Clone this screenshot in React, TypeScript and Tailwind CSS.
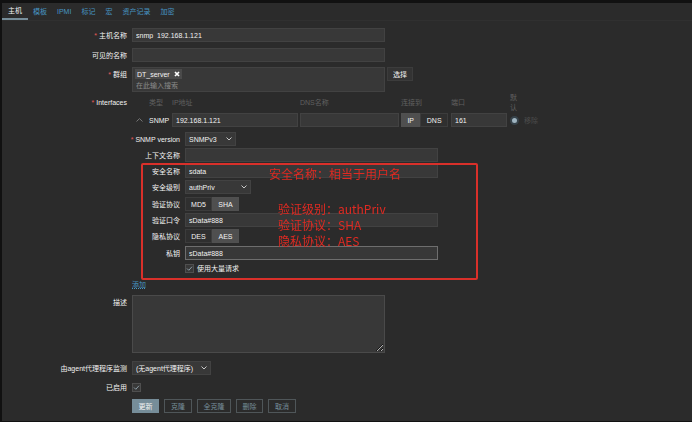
import type { ReactNode } from "react";

const FONT = "font-['Liberation_Sans','Noto_Sans_CJK_SC',sans-serif]";
const FIELD =
  "block h-[14px] border border-[#424242] bg-[#383838] px-[3px] text-[7px] leading-normal text-[#f2f2f2] outline-none";

function Label({ text, htmlFor, required }: { text: string; htmlFor?: string; required?: boolean }) {
  return (
    <label htmlFor={htmlFor} className="whitespace-nowrap">
      {required && <span className="mr-[2px] text-[#e45959]">*</span>}
      {text}
    </label>
  );
}

function Row({ label, id, required, className = "", children }: {
  label: string; id?: string; required?: boolean; className?: string; children: ReactNode;
}) {
  return (
    <div className={`flex items-start gap-[5px] ${className}`}>
      <div className="flex h-[14px] w-[125px] shrink-0 items-center justify-end">
        <Label text={label} htmlFor={id} required={required} />
      </div>
      {children}
    </div>
  );
}

function SubRow({ label, id, required, className = "mt-[2px]", children }: {
  label: string; id?: string; required?: boolean; className?: string; children: ReactNode;
}) {
  return (
    <div className={`flex h-[14px] items-center gap-[5px] ${className}`}>
      <div className="flex w-[48px] shrink-0 justify-end">
        <Label text={label} htmlFor={id} required={required} />
      </div>
      {children}
    </div>
  );
}

function Select({ id, width, options }: { id: string; width: string; options: string[] }) {
  return (
    <div className={`relative ${width}`}>
      <select id={id} className="block h-[14px] w-full appearance-none border border-[#424242] bg-[#383838] px-[3px] pt-px text-[7px] leading-[12px] outline-none">
        {options.map((o) => <option key={o}>{o}</option>)}
      </select>
      <svg viewBox="0 0 6 4" className="pointer-events-none absolute top-[5px] right-[4px] h-[4px] w-[6px]" fill="none" stroke="#c8c8c8">
        <path d="M0.5 0.5 3 3 5.500 0.5" />
      </svg>
    </div>
  );
}

function Segments({ name, items, selected }: { name: string; items: string[]; selected: string }) {
  return (
    <div role="radiogroup" aria-label={name} className="flex h-[14px]">
      {items.map((item) => (
        <label
          key={item}
          className={`flex items-center justify-center border ${name === "connect" ? "grow" : "w-[27px]"} ${
            item === selected ? "border-[#505050] bg-[#4f4f4f]" : "border-[#3c3c3c] bg-[#2f2f2f]"
          }`}
        >
          <input type="radio" name={name} defaultChecked={item === selected} className="sr-only" />
          {item}
        </label>
      ))}
    </div>
  );
}

function Checkbox({ id }: { id: string }) {
  return (
    <span className="relative block size-[9px]">
      <input id={id} type="checkbox" defaultChecked className="block size-[9px] appearance-none border border-[#4f4f4f] bg-[#383838]" />
      <svg viewBox="0 0 9 9" className="pointer-events-none absolute inset-0 size-[9px]" fill="none" stroke="#8b9ba4">
        <path d="M2 4.500 3.800 6.300 7 2.700" />
      </svg>
    </span>
  );
}

const TABS = ["模板", "IPMI", "标记", "宏", "资产记录", "加密"];
const TH = "p-0 text-left font-normal text-[#606060]";

export default function App() {
  return (
    <div className={`min-h-screen border-t-[3px] border-b border-l-2 border-[#111111] bg-[#2b2b2b] text-[7px] leading-[11px] text-[#f2f2f2] ${FONT}`}>
      <nav className="flex h-[18px] border-b border-[#303030] text-[#4796c4]">
        <a href="#host" className="flex h-[17px] items-center border-b-2 border-[#768d99] px-[6px] text-[#f2f2f2]">主机</a>
        {TABS.map((t) => (
          <a key={t} href={`#${t}`} className="flex h-[16px] items-center px-[5px]">{t}</a>
        ))}
      </nav>

      <form className="pt-[7px] pb-[8px]">
        <Row label="主机名称" id="host" required>
          <input id="host" defaultValue="snmp_192.168.1.121" className={`${FIELD} w-[253px]`} />
        </Row>
        <Row label="可见的名称" id="visible" className="mt-[6px]">
          <input id="visible" className={`${FIELD} w-[253px]`} />
        </Row>
        <Row label="群组" id="groups" required className="mt-[5px]">
          <div className="-mr-[3px] h-[25px] w-[253px] border border-[#424242] bg-[#383838] px-[2px] pt-px">
            <span className="inline-flex h-[10px] items-center gap-[4px] bg-[#4a4a4a] px-[2px] align-top">
              DT_server
              <button type="button" aria-label="移除 DT_server">
                <svg viewBox="0 0 6 6" className="size-[6px]" stroke="#ffffff" strokeWidth="1.700">
                  <path d="M1 1 5 5M5 1 1 5" />
                </svg>
              </button>
            </span>
            <input id="groups" placeholder="在此输入搜索" className="block h-[11px] w-full px-px outline-none placeholder:text-[#8a8a8a]" />
          </div>
          <button type="button" className="h-[14px] w-[26px] border border-[#3c3c3c] bg-[#333333]">选择</button>
        </Row>

        <div className="flex gap-[5px]">
          <div className="flex h-[21px] w-[125px] shrink-0 items-center justify-end">
            <Label text="Interfaces" required />
          </div>
          <div>
            <table className="w-[413px] table-fixed border-collapse">
              <colgroup>
                <col className="w-[40px]" />
                <col className="w-[128px]" />
                <col className="w-[101px]" />
                <col className="w-[50px]" />
                <col className="w-[59px]" />
                <col className="w-[14px]" />
                <col className="w-[21px]" />
              </colgroup>
              <thead>
                <tr className="h-[21px]">
                  <th className="p-0 pl-[17px] text-left font-normal text-[#606060]">类型</th>
                  <th className={TH}>IP地址</th>
                  <th className={TH}>DNS名称</th>
                  <th className={TH}>连接到</th>
                  <th className={TH}>端口</th>
                  <th className="p-0 text-left leading-[10px] font-normal text-[#606060]">默<br />认</th>
                  <th className={TH} />
                </tr>
              </thead>
              <tbody>
                <tr className="h-[14px]">
                  <td className="p-0">
                    <div className="flex items-center gap-[6px] pl-[4px]">
                      <button type="button" aria-label="收起">
                        <svg viewBox="0 0 7 4" className="h-[4px] w-[7px]" fill="none" stroke="#777777">
                          <path d="M0.500 3.500 3.500 0.600 6.500 3.500" />
                        </svg>
                      </button>
                      SNMP
                    </div>
                  </td>
                  <td className="p-0 pr-[2px]"><input aria-label="IP地址" defaultValue="192.168.1.121" className={`${FIELD} w-full`} /></td>
                  <td className="p-0 pr-[2px]"><input aria-label="DNS名称" className={`${FIELD} w-full`} /></td>
                  <td className="p-0 pr-[3px]"><Segments name="connect" items={["IP", "DNS"]} selected="IP" /></td>
                  <td className="p-0 pr-[3px]"><input aria-label="端口" defaultValue="161" className={`${FIELD} w-full`} /></td>
                  <td className="p-0">
                    <input type="radio" name="default" aria-label="默认" defaultChecked className="block size-[9px] appearance-none rounded-full border-2 border-[#36424a] bg-[#9fb4c0]" />
                  </td>
                  <td className="p-0"><button type="button" disabled className="block text-[#4c4c4c]">移除</button></td>
                </tr>
              </tbody>
            </table>

            <div className="relative mt-[5px]">
              <SubRow label="SNMP version" id="version" required className="">
                <Select id="version" width="w-[51px]" options={["SNMPv3", "SNMPv2", "SNMPv1"]} />
              </SubRow>
              <SubRow label="上下文名称" id="context">
                <input id="context" className={`${FIELD} w-[253px]`} />
              </SubRow>
              <SubRow label="安全名称" id="secname">
                <input id="secname" defaultValue="sdata" className={`${FIELD} w-[253px]`} />
              </SubRow>
              <SubRow label="安全级别" id="level">
                <Select id="level" width="w-[66px]" options={["authPriv", "authNoPriv", "noAuthNoPriv"]} />
              </SubRow>
              <SubRow label="验证协议" className="mt-[3px]">
                <Segments name="auth" items={["MD5", "SHA"]} selected="SHA" />
              </SubRow>
              <SubRow label="验证口令" id="authpass">
                <input id="authpass" defaultValue="sData#888" className={`${FIELD} w-[253px]`} />
              </SubRow>
              <SubRow label="隐私协议">
                <Segments name="privacy" items={["DES", "AES"]} selected="AES" />
              </SubRow>
              <SubRow label="私钥" id="privpass" className="mt-[3px]">
                <input id="privpass" autoFocus defaultValue="sData#888" className="block h-[14px] w-[253px] border border-[#6e6e6e] bg-[#383838] px-[3px] leading-normal outline-none" />
              </SubRow>
              <div className="mt-[3px] flex h-[11px] items-center gap-[3px] pl-[53px]">
                <Checkbox id="bulk" />
                <label htmlFor="bulk">使用大量请求</label>
              </div>

              <div className="pointer-events-none absolute top-[31px] left-[9px] h-[117px] w-[337px] rounded-[2px] border-2 border-[#d9302a] font-['Noto_Sans_CJK_SC',sans-serif] text-[12px] leading-[16px] text-[#e02a22]">
                <p className="pt-px pl-[126px]">安全名称：相当于用户名</p>
                <p className="pt-[19px] pl-[135px]">
                  验证级别：authPriv<br />
                  验证协议：SHA<br />
                  隐私协议：AES
                </p>
              </div>
            </div>
            <a href="#add" className="mt-[5px] block h-[11px] w-fit text-[#4796c4] underline decoration-dotted">添加</a>
          </div>
        </div>

        <Row label="描述" id="description" className="mt-[5px]">
          <textarea id="description" className="block h-[58px] w-[253px] resize border border-[#4a4a4a] bg-[#383838] outline-none" />
        </Row>
        <Row label="由agent代理程序监测" id="proxy" className="mt-[8px]">
          <Select id="proxy" width="w-[79px]" options={["(无agent代理程序)"]} />
        </Row>
        <Row label="已启用" id="enabled" className="mt-[5px]">
          <div className="flex h-[14px] items-center"><Checkbox id="enabled" /></div>
        </Row>
        <div className="mt-[5px] flex gap-[5px] pl-[130px] text-[#768d99]">
          <button type="button" className="h-[14px] w-[27px] bg-[#768d99] text-[#f2f2f2]">更新</button>
          <button type="button" className="h-[14px] w-[28px] border border-[#4f5659]">克隆</button>
          <button type="button" className="h-[14px] w-[34px] border border-[#4f5659]">全克隆</button>
          <button type="button" className="h-[14px] w-[27px] border border-[#4f5659]">删除</button>
          <button type="button" className="h-[14px] w-[28px] border border-[#4f5659]">取消</button>
        </div>
      </form>
    </div>
  );
}
